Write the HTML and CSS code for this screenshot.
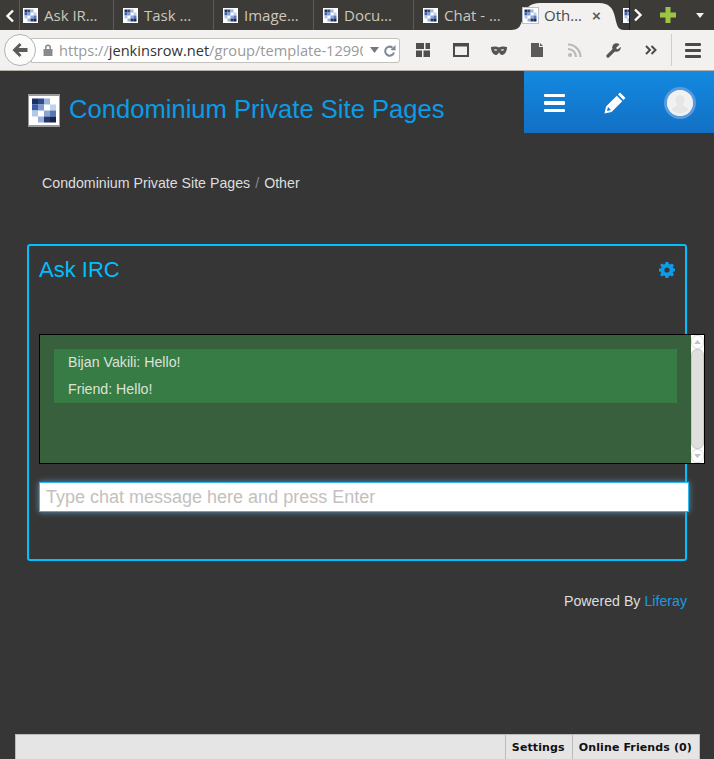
FILE: index.html
```html
<!DOCTYPE html>
<html lang="en">
<head>
<meta charset="utf-8">
<title>Other - Condominium Private Site Pages</title>
<link rel="stylesheet" href="styles.css">
</head>
<body>
<svg class="defs" width="0" height="0" aria-hidden="true">
  <symbol id="fav" viewBox="0 0 15 15">
    <rect width="15" height="15" fill="#fff"/>
    <rect x="1.5" y="1.5" width="3" height="3" fill="#1c2f66"/><rect x="4.5" y="1.5" width="3" height="3" fill="#2f4b8c"/><rect x="7.5" y="1.5" width="3" height="3" fill="#9db4dc"/>
    <rect x="1.5" y="4.5" width="3" height="3" fill="#3d5ea5"/><rect x="4.5" y="4.5" width="3" height="3" fill="#7f9bd0"/><rect x="10.5" y="4.5" width="3" height="3" fill="#c3d2ec"/>
    <rect x="1.5" y="7.5" width="3" height="3" fill="#b5c7e6"/><rect x="7.5" y="7.5" width="3" height="3" fill="#8aa5d6"/><rect x="10.5" y="7.5" width="3" height="3" fill="#5577ba"/>
    <rect x="4.5" y="10.5" width="3" height="3" fill="#98afdb"/><rect x="7.5" y="10.5" width="3" height="3" fill="#22396f"/><rect x="10.5" y="10.5" width="3" height="3" fill="#15244f"/>
  </symbol>
</svg>

<header class="browser">
  <div class="tabbar">
    <div class="scroll-left"><svg width="10" height="14" viewBox="0 0 10 14"><path d="M8 1.500 2.500 7 8 12.500" fill="none" stroke="#fff" stroke-width="2.400"/></svg></div>
    <div class="tabs">
      <div class="tab tab-first"><svg class="fav"><use href="#fav"/></svg><span>Ask IR…</span></div>
      <div class="tab"><svg class="fav"><use href="#fav"/></svg><span>Task …</span></div>
      <div class="tab"><svg class="fav"><use href="#fav"/></svg><span>Image…</span></div>
      <div class="tab"><svg class="fav"><use href="#fav"/></svg><span>Docu…</span></div>
      <div class="tab"><svg class="fav"><use href="#fav"/></svg><span>Chat - …</span></div>
      <div class="tab tab-active">
        <svg class="tab-shape" width="113" height="29" viewBox="0 0 113 29"><path d="M0 29C8 29 10 25 12 16 14 7 19 2 29 2H88C98 2 102 7 104 16 106 25 107 29 113 29Z" fill="#f2f1ef"/></svg>
        <svg class="fav fav-active"><use href="#fav"/></svg><span>Oth…</span><b class="close">×</b>
      </div>
      <div class="tab tab-cut"><svg class="fav"><use href="#fav"/></svg></div>
    </div>
    <div class="tab-controls">
      <svg width="10" height="14" viewBox="0 0 10 14"><path d="M2 1.500 7.500 7 2 12.500" fill="none" stroke="#fff" stroke-width="2.400"/></svg>
      <svg class="plus" width="16" height="16" viewBox="0 0 16 16"><path d="M5.500 0h5v5.500h5.500v5h-5.500v5.500h-5v-5.500h-5.500v-5h5.500z" fill="#9dc544"/></svg>
      <svg class="menu-drop" width="8" height="5" viewBox="0 0 8 5"><path d="M0 0h8L4 5z" fill="#f2f1ef"/></svg>
    </div>
  </div>
  <div class="toolbar">
    <div class="back"><svg width="16" height="14" viewBox="0 0 16 14"><path d="M7.500 0 9.500 2 6.500 5H15.500V9H6.500L9.500 12 7.500 14 0.500 7z" fill="#5a5a5a"/></svg></div>
    <div class="urlbar">
      <svg class="lock" width="10" height="12" viewBox="0 0 10 12"><path d="M2 5V3.500a3 3 0 0 1 6 0V5h1.500v7H.5V5zM3.500 5h3V3.500a1.500 1.500 0 0 0-3 0z" fill="#8a8a8a"/></svg>
      <div class="url"><span class="dim">https://</span>jenkinsrow.net<span class="dim">/group/template-12990</span></div>
      <svg class="url-drop" width="9" height="6" viewBox="0 0 9 6"><path d="M0 0h9L4.500 6z" fill="#777"/></svg>
      <svg class="reload" width="12" height="13" viewBox="0 0 12 13"><path d="M10 8.500A4.500 4.500 0 1 1 8.500 3.600" fill="none" stroke="#7c8a96" stroke-width="2"/><path d="M6.500 6 11.500 6.500V1z" fill="#7c8a96"/></svg>
    </div>
    <div class="tools">
      <svg width="14" height="14" viewBox="0 0 14 14"><path d="M0 0h8v6H0zM9.500 0H14v6H9.500zM0 7.500h6V14H0zM7.500 7.500H14V14H7.500z" fill="#4f4f4f"/></svg>
      <svg width="16" height="14" viewBox="0 0 16 14"><rect x="1" y="1" width="14" height="12" fill="none" stroke="#4a4a4a" stroke-width="2"/><rect x="1" y="1" width="14" height="2.500" fill="#4a4a4a"/></svg>
      <svg width="16" height="9" viewBox="0 0 16 9"><path d="M0 1C3 0 6 .5 8 1.500 10 .5 13 0 16 1 16 5 14 9 11 9 9.500 9 8.500 7 8 6.500 7.500 7 6.500 9 5 9 2 9 0 5 0 1ZM3 3.500C3.500 5 5.500 5 6.500 4 5.500 3 4 3 3 3.500ZM13 3.500C12 3 10.500 3 9.500 4 10.500 5 12.500 5 13 3.500Z" fill="#555" fill-rule="evenodd"/></svg>
      <svg width="12" height="14" viewBox="0 0 12 14"><path d="M0 0H8L8 4H12V14H0ZM9 0 12 3H9Z" fill="#5a5a5a"/></svg>
      <svg width="14" height="14" viewBox="0 0 14 14"><circle cx="2" cy="12" r="2" fill="#b9b9b7"/><path d="M0 6a8 8 0 0 1 8 8M0 1.500a12.500 12.500 0 0 1 12.500 12.500" fill="none" stroke="#b9b9b7" stroke-width="2.200"/></svg>
      <svg width="15" height="15" viewBox="0 0 15 15"><path d="M2 13 8 7" stroke="#555" stroke-width="3.200" stroke-linecap="round"/><circle cx="10.500" cy="4.500" r="4.300" fill="#555"/><path d="M10 5 14 1 16 3 11.500 6.500Z" fill="#f2f1ef"/></svg>
      <svg width="12" height="10" viewBox="0 0 12 10"><path d="M1 1 5 5 1 9M6.500 1 10.500 5 6.500 9" fill="none" stroke="#4a4a4a" stroke-width="2"/></svg>
    </div>
    <div class="hamburger"><i></i><i></i><i></i></div>
  </div>
</header>

<main class="page">
  <section class="site-head">
    <div class="brand">
      <svg class="logo"><use href="#fav"/></svg>
      <h1>Condominium Private Site Pages</h1>
    </div>
    <nav class="dock-top">
      <div class="bars"><i></i><i></i><i></i></div>
      <svg width="22" height="22" viewBox="0 0 22 22"><path d="M16 0.500 21.500 6 19.500 8 14 2.500ZM12.800 3.700 18.300 9.200 7.500 20 0.500 21.500 2 14.500ZM4 15 3 19 7 18Z" fill="#fff" fill-rule="evenodd"/></svg>
      <div class="avatar"><svg width="26" height="26" viewBox="0 0 26 26"><circle cx="13" cy="13" r="13" fill="#f1f1f1"/><path d="M13 5c3 0 4.500 2.500 4.500 5 0 2-1 4-2 5 .5 1.500 5 2.500 6 4.500a11 11 0 0 1-17 0c1-2 5.500-3 6-4.500-1-1-2-3-2-5 0-2.500 1.500-5 4.500-5Z" fill="#e6e6e6"/></svg></div>
    </nav>
  </section>

  <div class="breadcrumb"><span>Condominium Private Site Pages</span><em>/</em><span>Other</span></div>

  <section class="portlet">
    <div class="portlet-head">
      <h2>Ask IRC</h2>
      <svg width="16" height="16" viewBox="0 0 16 16"><path d="M6.500 0h3l.4 2.200 1.300.5L13 1.500l2 2-1.200 1.800.5 1.300 2.200.4v2.800l-2.200.4-.5 1.300L15 13.500l-2 2-1.800-1.200-1.300.5L9.500 17h-3l-.4-2.200-1.300-.5L3 15.500l-2-2 1.200-1.800-.5-1.300L0 10V7l2.200-.4.500-1.300L1 3.500l2-2 1.800 1.200 1.300-.5z" transform="scale(1 .94)" fill="#0e9be8"/><circle cx="8" cy="8" r="2.600" fill="#363636"/></svg>
    </div>
    <div class="chat">
      <div class="chat-log">
        <div class="messages">
          <p>Bijan Vakili: Hello!</p>
          <p>Friend: Hello!</p>
        </div>
      </div>
      <div class="scrollbar">
        <div class="sb-btn"><svg width="7" height="4" viewBox="0 0 7 4"><path d="M0 4h7L3.500 0z" fill="#c4c4c4"/></svg></div>
        <div class="sb-thumb"></div>
        <div class="sb-btn"><svg width="7" height="4" viewBox="0 0 7 4"><path d="M0 0h7L3.500 4z" fill="#c4c4c4"/></svg></div>
      </div>
    </div>
    <input class="chat-input" type="text" placeholder="Type chat message here and press Enter">
  </section>

  <footer class="powered">Powered By <a href="#">Liferay</a></footer>
</main>

<div class="chat-dock">
  <div class="dock-item">Settings</div>
  <div class="dock-item">Online Friends (0)</div>
</div>
</body>
</html>
```
FILE: styles.css
```css
* { box-sizing: border-box; }
html, body { margin: 0; height: 100%; }
body { width: 714px; height: 759px; overflow: hidden; background: #363636; font-family: "Liberation Sans", Arial, sans-serif; position: relative; }
.defs { display: block; height: 0; }

.tabbar { height: 30px; background: #3c3b37; display: flex; align-items: stretch; }
.scroll-left { width: 19px; display: flex; align-items: center; justify-content: center; padding-top: 1px; }
.tabs { width: 610px; display: flex; overflow: hidden; font: 15px/30px "Open Sans", "Noto Sans", sans-serif; color: #cdc7ba; }
.tab { flex: 0 0 100px; display: flex; align-items: center; gap: 6px; padding-left: 9px; border-left: 1px solid #5c5b56; white-space: nowrap; position: relative; }
.tab-first { flex-basis: 94px; padding-left: 3px; }
.fav { width: 15px; height: 15px; flex: none; position: relative; }
.tab-active { border-left: 0; padding-left: 10px; color: #4a4a4a; }
.tab-shape { position: absolute; left: -2px; top: 1px; }
.fav-active { outline: 1px solid #b9c2cc; }
.tab-active span { position: relative; }
.close { position: relative; margin-left: 4px; font: bold 15px/1 "Liberation Sans", sans-serif; color: #5d5d5d; }
.tab-cut { border-left: 0; padding-left: 10px; }
.tab-controls { flex: 1; border-left: 1px solid #1e1e1c; display: flex; align-items: center; padding-left: 3px; }
.plus { margin-left: 17px; }
.menu-drop { margin-left: 20px; }

.toolbar { height: 41px; background: #f2f1ef; border-bottom: 1px solid #b6b2aa; display: flex; align-items: center; padding-left: 4px; position: relative; }
.back { width: 32px; height: 32px; border-radius: 50%; background: #fbfbfa; border: 1px solid #aeb4bb; display: flex; align-items: center; justify-content: center; position: relative; z-index: 1; flex: none; }
.urlbar { width: 369px; height: 25px; margin-left: -5px; background: #fff; border: 1px solid #c2c0bb; border-radius: 0 3px 3px 0; display: flex; align-items: center; padding-left: 11px; }
.lock { flex: none; }
.url { width: 304px; margin-left: 6px; margin-right: 2px; overflow: hidden; white-space: nowrap; font: 14.600px/22px "Open Sans", "Noto Sans", sans-serif; color: #333; flex: none; }
.dim { color: #999; }
.url-drop { margin-left: 5px; flex: none; }
.reload { margin-left: 5px; flex: none; }
.tools { display: grid; grid-template-columns: repeat(7, 38px); justify-items: center; align-items: center; margin-left: 4px; padding-right: 1px; border-right: 1px solid #d0cec9; height: 32px; }
.hamburger { margin-left: 13px; width: 16px; display: flex; flex-direction: column; gap: 3px; }
.hamburger i { height: 3px; background: #4a4a4a; border-radius: 1px; }

.site-head { height: 62px; display: flex; justify-content: space-between; padding-left: 28px; }
.brand { display: flex; align-items: flex-start; gap: 9px; padding-top: 23px; }
.logo { width: 32px; height: 33px; border: 1px solid #999; }
h1 { margin: 0; font-weight: 400; font-size: 25.600px; line-height: 30px; color: #0b9be8; white-space: nowrap; }
.dock-top { width: 190px; background: linear-gradient(#1389e0, #1270c4); display: flex; align-items: center; gap: 39px; padding-left: 20px; padding-top: 2px; }
.bars { width: 21px; display: flex; flex-direction: column; gap: 4px; }
.bars i { height: 3.500px; background: #fff; border-radius: 1px; }
.avatar { width: 32px; height: 32px; border-radius: 50%; border: 3px solid #5a9be0; overflow: hidden; display: flex; background: #f1f1f1; margin-left: -1px; }

.breadcrumb { margin: 41px 0 0 42px; font-size: 14.200px; line-height: 18px; color: #dedede; display: flex; gap: 5px; }
.breadcrumb em { font-style: normal; color: #8a8a8a; }

.portlet { width: 660px; height: 317px; margin: 52px 0 0 27px; border: 2px solid #00c0ff; border-radius: 3px; padding: 0 10px; }
.portlet-head { display: flex; justify-content: space-between; align-items: flex-start; height: 88px; padding-top: 12px; }
.portlet-head svg { margin-top: 4px; }
h2 { margin: 0; font-weight: 400; font-size: 22px; line-height: 24px; color: #00bfff; }
.chat { width: 666px; height: 130px; display: flex; border: 1px solid #000; background: #38603c; }
.chat-log { flex: 1; padding: 14px 14px 0 14px; }
.messages { background: #377c45; padding: 0 14px; height: 54px; font-size: 14.200px; color: #dde2d9; }
.messages p { margin: 0; line-height: 27px; }
.scrollbar { width: 13px; background: #fff; display: flex; flex-direction: column; }
.sb-btn { height: 14px; display: flex; align-items: center; justify-content: center; border: 1px solid #ddd; border-radius: 6px; flex: none; }
.sb-thumb { flex: 1; background: #e0dfdd; border: 1px solid #c8c8c6; border-radius: 6px; }
.chat-input { display: block; width: 650px; height: 30px; margin-top: 18px; padding: 0 6px; border: 1px solid #2cb8f0; background: #fff; box-shadow: 0 0 6px #5f93b8; font: 18px "Liberation Sans", sans-serif; color: #333; outline: 0; }
.chat-input::placeholder { color: #c4c0bd; opacity: 1; }

.powered { margin: 32px 0 0; width: 687px; text-align: right; font-size: 14.200px; line-height: 16px; color: #dedede; }
.powered a { color: #1a9be0; text-decoration: none; }

.chat-dock { position: absolute; left: 15px; top: 734px; width: 685px; height: 25px; background: #e5e5e5; border: 1px solid #bbb; border-bottom: 0; display: flex; justify-content: flex-end; font: bold 11px/25px "DejaVu Sans", sans-serif; letter-spacing: .12px; color: #111; }
.dock-item { padding: 0 7px 0 6px; border-left: 1px solid #bbb; white-space: nowrap; }
```
